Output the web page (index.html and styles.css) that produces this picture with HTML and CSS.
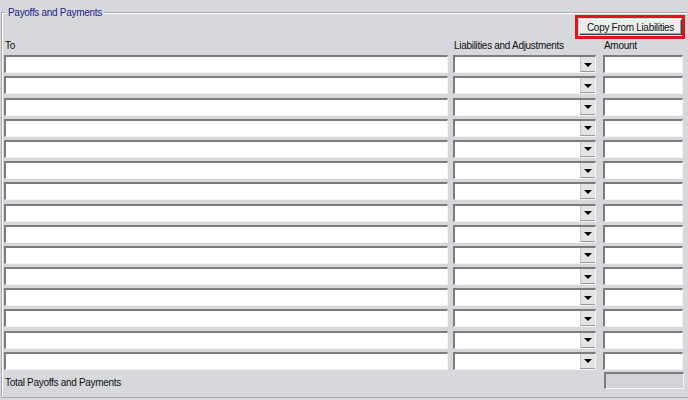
FILE: index.html
```html
<!DOCTYPE html>
<html lang="en">
<head>
  <meta charset="UTF-8">
  <title>Payoffs and Payments</title>
  <link rel="stylesheet" href="styles.css">
</head>
<body>

  <div class="group">
    <span class="group-title">Payoffs and Payments</span>

    <div class="toolbar">
      <div class="highlight">
        <button class="btn">Copy From Liabilities</button>
      </div>
    </div>

    <div class="grid" id="grid">
      <div class="head">To</div>
      <div class="head col-combo">Liabilities and Adjustments</div>
      <div class="head col-amount">Amount</div>
    </div>

    <div class="total-row">
      <span class="total-label">Total Payoffs and Payments</span>
      <div class="field total-field"></div>
    </div>
  </div>

  <script>
    // 15 lignes : champ texte, liste deroulante, montant
    const grid = document.getElementById('grid');
    for (let i = 0; i < 15; i++) {
      grid.insertAdjacentHTML('beforeend',
        '<div class="field"></div>' +
        '<div class="field combo col-combo"><span class="combo-btn"><span class="arrow"></span></span></div>' +
        '<div class="field col-amount"></div>');
    }
  </script>

</body>
</html>
```

FILE: styles.css
```css
:root {
  --face: #d6d8dc;
  --dark: #7c7c7c;
  --light: #f4f4f4;
  --title: #232391;
  --red: #e3121c;
}
* {
  box-sizing: border-box;
  margin: 0;
  padding: 0;
}
body {
  background: var(--face);
  font-family: 'Liberation Sans', Arial, sans-serif;
  font-size: 10px;
  letter-spacing: -0.3px;
  color: #111;
  width: 688px;
  height: 400px;
  overflow: hidden;
}
.group {
  position: relative;
  margin: 12px 0 0 1px;
  height: 386px;
  border: 1px solid #a8aaae;
  border-right: none;
  box-shadow: inset 1px 1px 0 #fff;
  padding: 2px 0 0 2px;
}
.group-title {
  position: absolute;
  top: -7px;
  left: 4px;
  padding: 0 2px;
  background: var(--face);
  color: var(--title);
  line-height: 13px;
}
.toolbar {
  display: flex;
  justify-content: flex-end;
  padding-right: 3px;
}
.highlight {
  border: 3px solid var(--red);
  padding: 1px 0 1px 1px;
}
.btn {
  display: block;
  width: 103px;
  height: 16px;
  font: 10px 'Liberation Sans', Arial, sans-serif;
  letter-spacing: -0.3px;
  color: #111;
  background: #ececec;
  border: 1px solid;
  border-color: #fff #404040 #404040 #fff;
  box-shadow: inset -1px -1px 0 #a0a0a0;
  line-height: 13px;
}
.grid {
  display: grid;
  grid-template-columns: 444px 148px 87px;
  row-gap: 3.2px;
  grid-template-rows: 12px;
  grid-auto-rows: 18px;
  margin-top: 1px;
}
.col-combo { margin-left: 5px; }
.col-amount { margin-left: 7px; }
.head {
  line-height: 12px;
  padding-left: 1px;
}
.field {
  background: #fff;
  border-top: 2px solid var(--dark);
  border-left: 2px solid var(--dark);
  border-bottom: 1px solid var(--light);
  border-right: 1px solid var(--light);
}
.combo {
  position: relative;
}
.combo-btn {
  position: absolute;
  right: 0;
  top: 0;
  bottom: 0;
  width: 15px;
  background: #e4e4e4;
  border-left: 1px solid #c4c4c4;
  border-bottom: 1px solid #9a9a9a;
  display: flex;
  align-items: center;
  justify-content: center;
}
.arrow {
  width: 0;
  height: 0;
  border-left: 4px solid transparent;
  border-right: 4px solid transparent;
  border-top: 4px solid #000;
  margin-top: 1px;
}
.total-row {
  display: flex;
  justify-content: space-between;
  align-items: flex-start;
  margin-top: 2px;
  padding-right: 4px;
}
.total-label {
  margin-top: 5px;
  padding-left: 1px;
}
.total-field {
  width: 80px;
  height: 17px;
  background: #d2d4d8;
}
```
